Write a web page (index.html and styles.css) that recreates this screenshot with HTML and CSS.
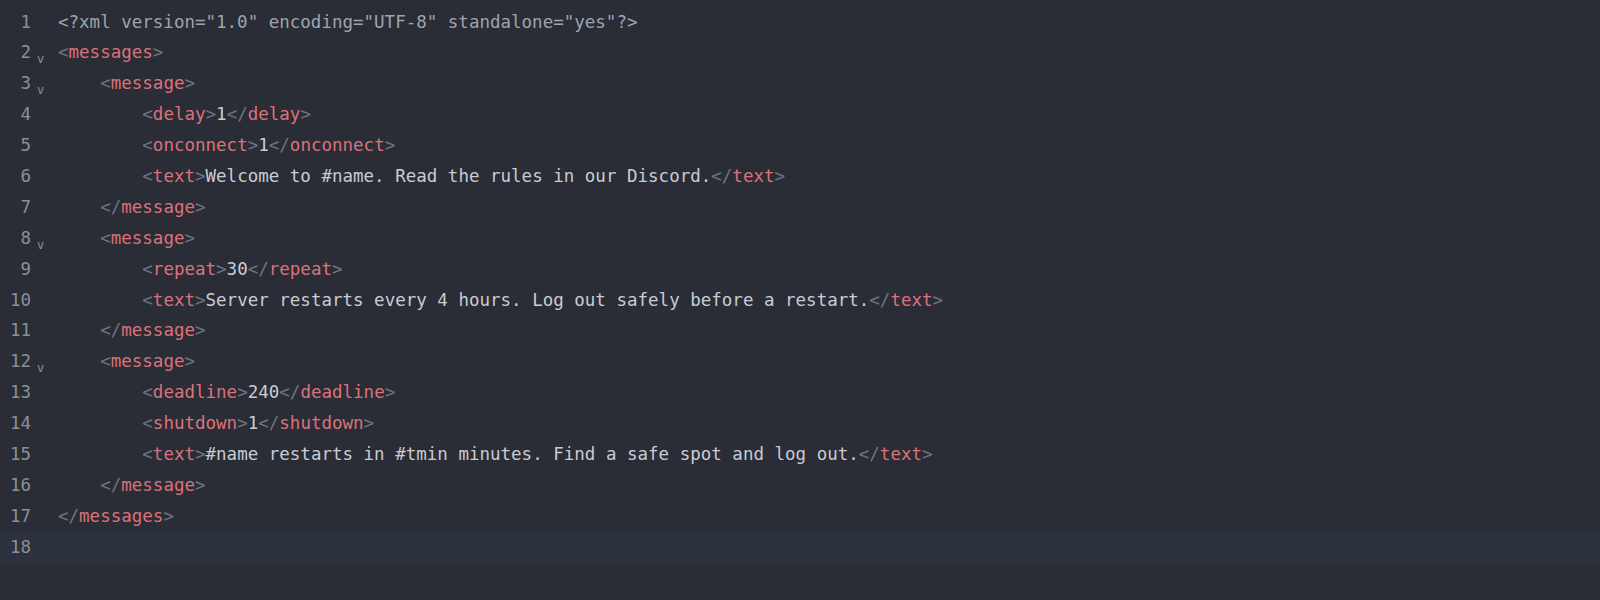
FILE: index.html
```html
<!DOCTYPE html>
<html>
<head>
<meta charset="UTF-8">
<link rel="stylesheet" href="styles.css">
</head>
<body>
<div class="editor">
  <div class="line"><span class="gutter"><span class="num">1</span><span class="fold"></span></span><span class="code"><span class="decl">&lt;?xml version="1.0" encoding="UTF-8" standalone="yes"?&gt;</span></span></div>
  <div class="line"><span class="gutter"><span class="num">2</span><span class="fold">v</span></span><span class="code"><span class="p">&lt;</span><span class="t">messages</span><span class="p">&gt;</span></span></div>
  <div class="line"><span class="gutter"><span class="num">3</span><span class="fold">v</span></span><span class="code">    <span class="p">&lt;</span><span class="t">message</span><span class="p">&gt;</span></span></div>
  <div class="line"><span class="gutter"><span class="num">4</span><span class="fold"></span></span><span class="code">        <span class="p">&lt;</span><span class="t">delay</span><span class="p">&gt;</span><span class="x">1</span><span class="p">&lt;/</span><span class="t">delay</span><span class="p">&gt;</span></span></div>
  <div class="line"><span class="gutter"><span class="num">5</span><span class="fold"></span></span><span class="code">        <span class="p">&lt;</span><span class="t">onconnect</span><span class="p">&gt;</span><span class="x">1</span><span class="p">&lt;/</span><span class="t">onconnect</span><span class="p">&gt;</span></span></div>
  <div class="line"><span class="gutter"><span class="num">6</span><span class="fold"></span></span><span class="code">        <span class="p">&lt;</span><span class="t">text</span><span class="p">&gt;</span><span class="x">Welcome to #name. Read the rules in our Discord.</span><span class="p">&lt;/</span><span class="t">text</span><span class="p">&gt;</span></span></div>
  <div class="line"><span class="gutter"><span class="num">7</span><span class="fold"></span></span><span class="code">    <span class="p">&lt;/</span><span class="t">message</span><span class="p">&gt;</span></span></div>
  <div class="line"><span class="gutter"><span class="num">8</span><span class="fold">v</span></span><span class="code">    <span class="p">&lt;</span><span class="t">message</span><span class="p">&gt;</span></span></div>
  <div class="line"><span class="gutter"><span class="num">9</span><span class="fold"></span></span><span class="code">        <span class="p">&lt;</span><span class="t">repeat</span><span class="p">&gt;</span><span class="x">30</span><span class="p">&lt;/</span><span class="t">repeat</span><span class="p">&gt;</span></span></div>
  <div class="line"><span class="gutter"><span class="num">10</span><span class="fold"></span></span><span class="code">        <span class="p">&lt;</span><span class="t">text</span><span class="p">&gt;</span><span class="x">Server restarts every 4 hours. Log out safely before a restart.</span><span class="p">&lt;/</span><span class="t">text</span><span class="p">&gt;</span></span></div>
  <div class="line"><span class="gutter"><span class="num">11</span><span class="fold"></span></span><span class="code">    <span class="p">&lt;/</span><span class="t">message</span><span class="p">&gt;</span></span></div>
  <div class="line"><span class="gutter"><span class="num">12</span><span class="fold">v</span></span><span class="code">    <span class="p">&lt;</span><span class="t">message</span><span class="p">&gt;</span></span></div>
  <div class="line"><span class="gutter"><span class="num">13</span><span class="fold"></span></span><span class="code">        <span class="p">&lt;</span><span class="t">deadline</span><span class="p">&gt;</span><span class="x">240</span><span class="p">&lt;/</span><span class="t">deadline</span><span class="p">&gt;</span></span></div>
  <div class="line"><span class="gutter"><span class="num">14</span><span class="fold"></span></span><span class="code">        <span class="p">&lt;</span><span class="t">shutdown</span><span class="p">&gt;</span><span class="x">1</span><span class="p">&lt;/</span><span class="t">shutdown</span><span class="p">&gt;</span></span></div>
  <div class="line"><span class="gutter"><span class="num">15</span><span class="fold"></span></span><span class="code">        <span class="p">&lt;</span><span class="t">text</span><span class="p">&gt;</span><span class="x">#name restarts in #tmin minutes. Find a safe spot and log out.</span><span class="p">&lt;/</span><span class="t">text</span><span class="p">&gt;</span></span></div>
  <div class="line"><span class="gutter"><span class="num">16</span><span class="fold"></span></span><span class="code">    <span class="p">&lt;/</span><span class="t">message</span><span class="p">&gt;</span></span></div>
  <div class="line"><span class="gutter"><span class="num">17</span><span class="fold"></span></span><span class="code"><span class="p">&lt;/</span><span class="t">messages</span><span class="p">&gt;</span></span></div>
  <div class="line current"><span class="gutter"><span class="num">18</span><span class="fold"></span></span><span class="code"></span></div>
</div>
</body>
</html>
```

FILE: styles.css
```css
html, body {
  margin: 0;
  padding: 0;
  background: #2a2d35;
  width: 1600px;
  height: 600px;
  overflow: hidden;
}

.editor {
  padding-top: 6.5px;
  font-family: "DejaVu Sans Mono", "Liberation Mono", monospace;
  font-size: 17.5px;
  line-height: 30.9px;
  color: #c8ccd4;
}

.line {
  display: flex;
  height: 30.9px;
  white-space: pre;
}

.line.current {
  background: #2c323d;
}

.gutter {
  display: flex;
  width: 58px;
  flex: none;
}

.num {
  width: 31px;
  text-align: right;
  color: #8b9099;
}

.fold {
  width: 27px;
  font-size: 12px;
  line-height: 44px;
  color: #8b9099;
  padding-left: 6px;
  box-sizing: border-box;
}

.code {
  flex: 1;
}

.decl {
  color: #9ea4ae;
}

.p {
  color: #6e7480;
}

.t {
  color: #dc717b;
}

.x {
  color: #c8ccd4;
}
```
